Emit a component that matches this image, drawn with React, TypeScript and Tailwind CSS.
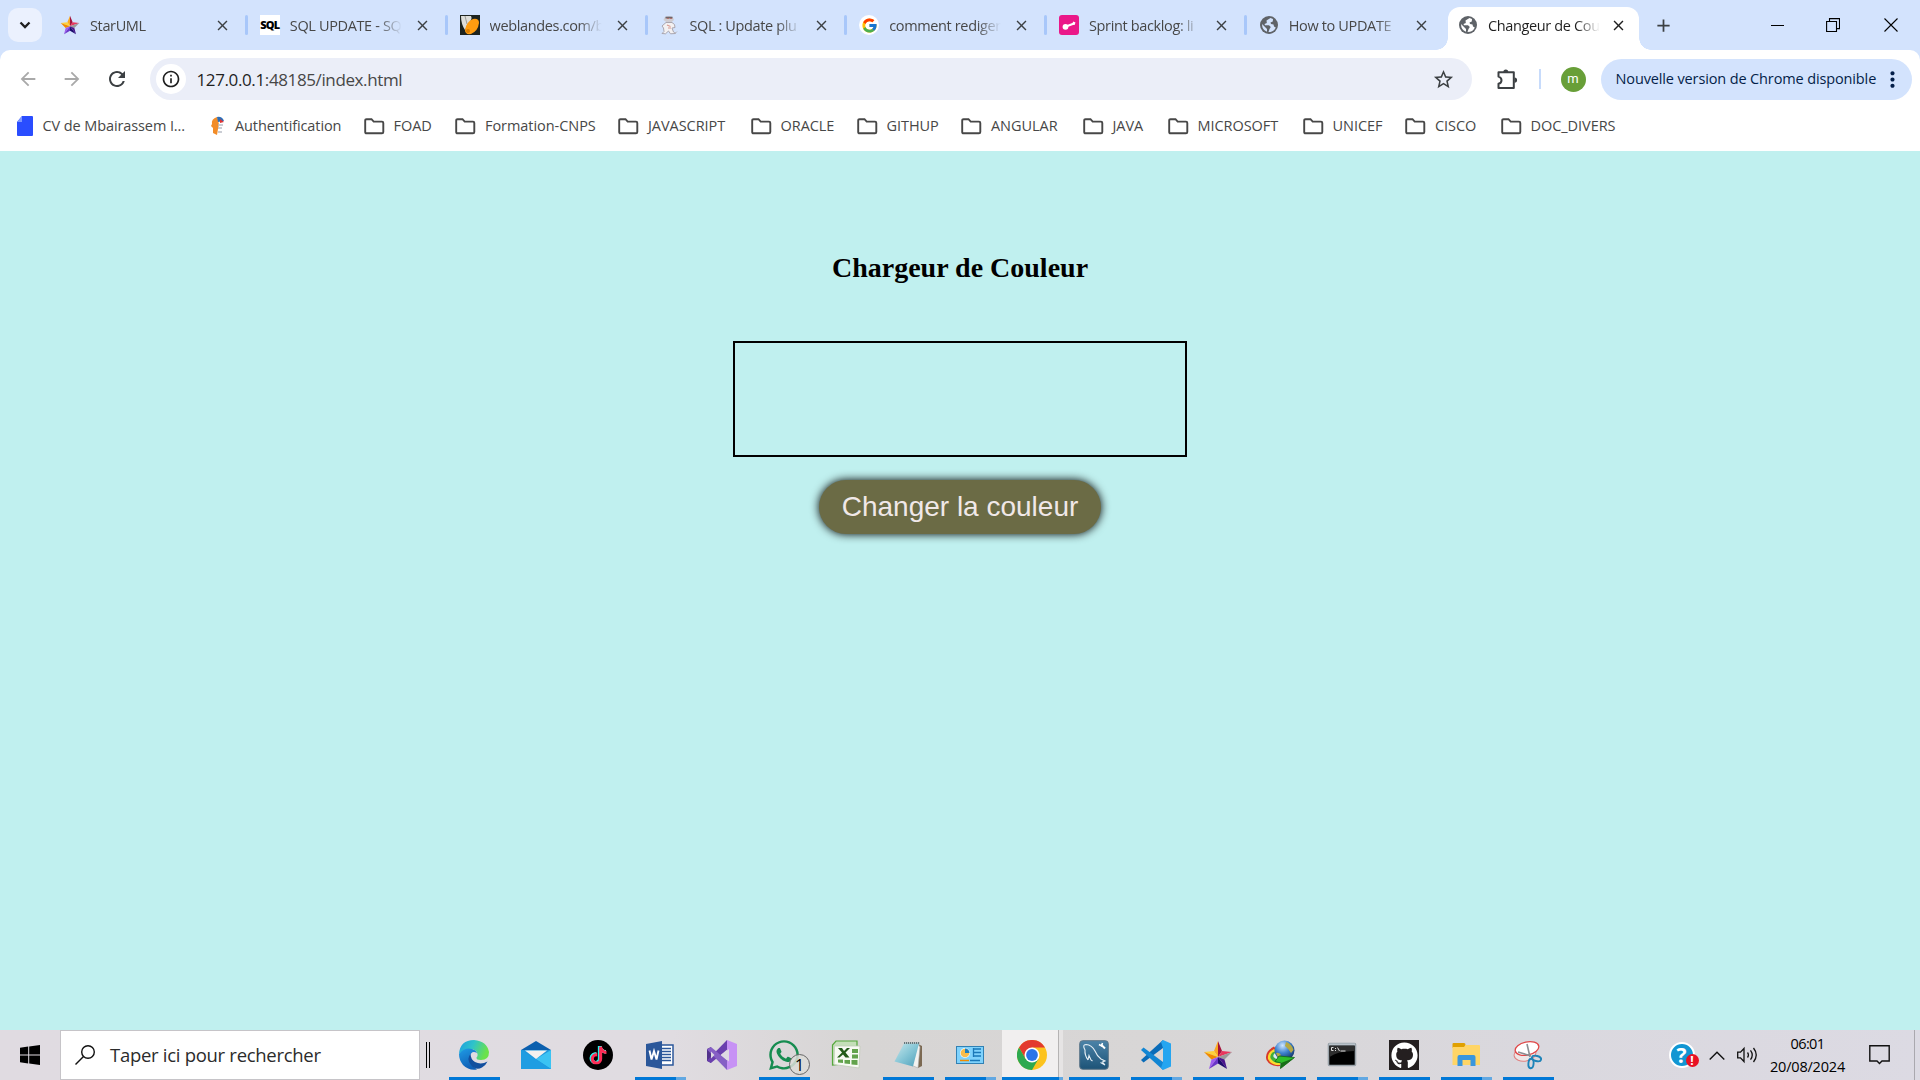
import type { ReactNode } from "react";
import {
  MdAdd,
  MdArrowBack,
  MdArrowForward,
  MdClose,
  MdInfoOutline,
  MdMoreVert,
  MdRefresh,
  MdStarBorder,
} from "react-icons/md";
import { FcGoogle } from "react-icons/fc";
import { FaGithub, FaTiktok, FaWhatsapp } from "react-icons/fa";

function StarLogo({ size }: { size: number }) {
  return (
    <svg width={size} height={size} viewBox="0 0 30 30">
      <path d="M15 1 L11 11 L15 17Z" fill="#f9a825" />
      <path d="M15 1 L19 11 L15 17Z" fill="#a3123c" />
      <path d="M1 12 L11 11 L15 17Z" fill="#ffd23a" />
      <path d="M1 12 L15 17 L8.5 19.500Z" fill="#f08a00" />
      <path d="M29 12 L19 11 L15 17Z" fill="#e8365d" />
      <path d="M29 12 L15 17 L21.500 19.500Z" fill="#9a9a9a" />
      <path d="M6 29 L8.5 19.500 L15 17Z" fill="#a05cf0" />
      <path d="M6 29 L15 17 V23.500Z" fill="#6a35c8" />
      <path d="M24 29 L21.500 19.500 L15 17Z" fill="#4a148c" />
      <path d="M24 29 L15 17 V23.500Z" fill="#1d0a6e" />
    </svg>
  );
}

function SqlIcon() {
  return (
    <span className="flex h-5 w-5 items-center justify-center bg-white font-['Open_Sans'] text-[11px] font-extrabold tracking-[-0.8px] text-black">
      SQL
    </span>
  );
}

function LandesIcon() {
  return (
    <svg width="20" height="20" viewBox="0 0 20 20">
      <rect width="20" height="20" fill="#1d231f" />
      <path d="M1 1 H11 Q13 4 8 9 L5 15 Q1 9 1 1Z" fill="#deded9" />
      <path d="M5 1 Q6 5 7 9" stroke="#8b8b86" strokeWidth=".8" fill="none" />
      <path d="M13 4 Q19 3 19 8 Q18 16 11 19 Q5 20 5 15 Q6 7 13 4Z" fill="#ff9c10" />
      <circle cx="8" cy="16" r="2" fill="#d97d00" />
    </svg>
  );
}

function MascotIcon() {
  return (
    <svg width="20" height="20" viewBox="0 0 20 20">
      <path d="M5.500 2.500 Q10 -.5 14 2.500 L15 5 L12 7.500 H8 L4.500 5Z" fill="#cfccd1" />
      <path d="M6.500 2.600h7" stroke="#6e666b" strokeWidth="1.800" />
      <path d="M8.500 3.500h1M11.500 3.500h1" stroke="#c94a3f" strokeWidth="1" />
      <path d="M7 7.500h6l2.500 2 .5 3-3 .5 1.500 4 2 1.500-5 .3-2-2.800-3 2.800-3.500-.3 2-2-.5-3.500-1.500-2Z" fill="#f3f1f2" stroke="#aaa6af" strokeWidth="1" />
      <path d="M8 10l3.500 1.500M9 13h3" stroke="#d99a90" strokeWidth="1.200" />
      <path d="M15 17.500q2.500 1 3-1" stroke="#b9b6bd" fill="none" />
    </svg>
  );
}

function GoogleIcon() {
  return (
    <span className="flex h-5 w-5 items-center justify-center rounded-full bg-white">
      <FcGoogle size={17} />
    </span>
  );
}

function SprintIcon() {
  return (
    <svg width="20" height="20" viewBox="0 0 20 20">
      <rect width="20" height="20" rx="3" fill="#ea1889" />
      <circle cx="6.500" cy="11.800" r="2.900" fill="#fff" />
      <path d="M7 11.500 L15 8.500" stroke="#fff" strokeWidth="2" strokeLinecap="round" />
      <path d="M14 6.500 L16.500 7.500 L15.500 10 L13.500 9.500Z" fill="#fff" />
    </svg>
  );
}

function GlobeIcon({ land = "#d3e3fd" }: { land?: string }) {
  return (
    <svg width="18" height="18" viewBox="0 0 18 18">
      <circle cx="9" cy="9" r="9" fill="#5f6368" />
      <path
        d="M10.500 2 L6.500 4.500 L6.800 7 L4.500 8 L5 9.200 H9 L10.800 11 L9.500 13 L8.500 16 Q14 16 15.800 11.500 L14 10.500 L13.500 8.500 L11 8 L10.500 6.500 L12.800 5.500 L13 3 Z"
        fill={land}
      />
      <path d="M2 8 L5.500 11.500 L7 13 V15.700 Q2 14 2 8Z" fill={land} />
    </svg>
  );
}

type Tab = { title: string; icon: ReactNode };

const tabs: Tab[] = [
  { title: "StarUML", icon: <StarLogo size={20} /> },
  { title: "SQL UPDATE - SQ", icon: <SqlIcon /> },
  { title: "weblandes.com/b", icon: <LandesIcon /> },
  { title: "SQL : Update plu", icon: <MascotIcon /> },
  { title: "comment rediger", icon: <GoogleIcon /> },
  { title: "Sprint backlog: li", icon: <SprintIcon /> },
  { title: "How to UPDATE", icon: <GlobeIcon /> },
];

function TabTitle({ children }: { children: ReactNode }) {
  return (
    <span className="ml-2.5 w-[113px] shrink-0 overflow-hidden whitespace-nowrap pt-0.5 text-[14.5px] tracking-[-0.36px] [mask-image:linear-gradient(to_right,black_78%,transparent_99%)]">
      {children}
    </span>
  );
}

function TabStrip() {
  return (
    <div className="flex h-[50px] bg-[#d3e3fd]">
      <div className="ml-2 mt-2 flex h-[34px] w-[34px] shrink-0 items-center justify-center rounded-[10px] bg-[#ebf1fe]">
        <svg width="12" height="8" viewBox="0 0 12 8">
          <path d="M1.500 1.500 L6 6 L10.500 1.500" fill="none" stroke="#1f1f1f" strokeWidth="2.300" />
        </svg>
      </div>
      <div className="ml-[18px] flex">
        {tabs.map((t, i) => (
          <div key={t.title} className="flex h-[50px] w-[199.800px] shrink-0 items-center">
            <span className="flex w-5 shrink-0 justify-center">{t.icon}</span>
            <TabTitle>
              <span className="text-[#474747]">{t.title}</span>
            </TabTitle>
            <MdClose size={17} color="#3c4043" className="ml-[11px] shrink-0" />
            {i < 6 && <span className="ml-[14px] h-5 w-[3px] shrink-0 rounded bg-[#a8c7fa]" />}
          </div>
        ))}
      </div>
      <div className="-ml-[22.600px] mt-[7px] flex h-[43px] shrink-0">
        <div className="h-3 w-3 self-end bg-[radial-gradient(circle_at_0_0,transparent_11.500px,white_12px)]" />
        <div className="flex h-[43px] w-[191px] items-center rounded-t-xl bg-white pb-[7px] pl-[10px]">
          <span className="flex w-5 shrink-0 justify-center">
            <GlobeIcon land="#fff" />
          </span>
          <TabTitle>
            <span className="text-[#1f1f1f]">Changeur de Cou</span>
          </TabTitle>
          <MdClose size={17} color="#1f1f1f" className="ml-[9px] shrink-0" />
        </div>
        <div className="h-3 w-3 self-end bg-[radial-gradient(circle_at_100%_0,transparent_11.500px,white_12px)]" />
      </div>
      <MdAdd size={21} color="#3c4043" className="ml-[2px] mt-[14.500px] shrink-0" />
      <div className="ml-auto flex h-[50px] items-center pr-[22px]">
        <span className="mr-[42px] h-px w-[13px] bg-black" />
        <svg className="mr-[44px]" width="14" height="14" viewBox="0 0 14 14">
          <path d="M.6 3.500h9.900v10H.6z M3.500 3V.6h10v10h-2.500" fill="none" stroke="#000" strokeWidth="1.100" />
        </svg>
        <svg width="14" height="14" viewBox="0 0 14 14">
          <path d="M.5 .5l13 13M13.500 .5l-13 13" stroke="#000" strokeWidth="1.100" />
        </svg>
      </div>
    </div>
  );
}

function ExtensionIcon() {
  return (
    <svg width="21" height="21" viewBox="0 0 21 21" className="ml-[25px]">
      <path
        d="M1.500 3.200 H16.800 V19 H1.500 V14.800 Q4.500 14 4.500 11.200 Q4.500 8.400 1.500 7.600Z"
        fill="none"
        stroke="#3c4043"
        strokeWidth="2"
        strokeLinejoin="round"
      />
      <path d="M6.300 3 A2.500 2.500 0 0 1 11.300 3Z M17.500 8.500 A2.600 2.600 0 0 1 17.500 13.700Z" fill="#3c4043" />
    </svg>
  );
}

function Toolbar() {
  return (
    <div className="bg-[#d3e3fd]">
      <div className="flex h-[58px] items-center rounded-t-[10px] bg-white pl-[17px]">
        <MdArrowBack size={22} color="#a9a9a9" />
        <MdArrowForward size={22} color="#a9a9a9" className="ml-[22px]" />
        <MdRefresh size={24} color="#3c4043" className="ml-[22px]" />
        <div className="ml-[21px] flex h-[42px] w-[1322px] items-center rounded-full bg-[#ebeef8] pl-1.5">
          <span className="flex h-[30px] w-[30px] items-center justify-center rounded-full bg-white">
            <MdInfoOutline size={20} color="#1f1f1f" />
          </span>
          <span className="ml-[10.500px] pt-0.5 text-[17px] tracking-[-0.38px] text-[#474747]">
            <span className="text-[#1f1f1f]">127.0.0.1</span>:48185/index.html
          </span>
          <MdStarBorder size={23} color="#3c4043" className="ml-auto mr-[17px]" />
        </div>
        <ExtensionIcon />
        <span className="ml-[21px] h-5 w-[1.500px] bg-[#c7dbfb]" />
        <span className="ml-5 flex h-[25px] w-[25px] items-center justify-center rounded-full bg-[#689f38] pb-px font-[Roboto] text-[13px] leading-none text-white">
          m
        </span>
        <div className="ml-[15px] flex h-[41px] w-[311px] items-center rounded-full bg-[#d3e3fd] pl-[15px] text-[#041e49]">
          <span className="w-[264px] whitespace-nowrap text-[14.500px] tracking-[-0.13px]">
            Nouvelle version de Chrome disponible
          </span>
          <MdMoreVert size={25} />
        </div>
      </div>
    </div>
  );
}

function FolderIcon() {
  return (
    <svg width="21" height="17" viewBox="0 0 21 17">
      <path
        d="M1.200 2.500 Q1.200 1.200 2.500 1.200 H7.500 L9.700 3.600 H18 Q19.300 3.600 19.300 4.900 V14 Q19.300 15.300 18 15.300 H2.500 Q1.200 15.300 1.200 14Z"
        fill="none"
        stroke="#474747"
        strokeWidth="1.900"
      />
    </svg>
  );
}

const folders: [string, string][] = [
  ["FOAD", "w-[91.500px]"],
  ["Formation-CNPS", "w-[163px]"],
  ["JAVASCRIPT", "w-[132.500px]"],
  ["ORACLE", "w-[106px]"],
  ["GITHUP", "w-[104.500px]"],
  ["ANGULAR", "w-[121.500px]"],
  ["JAVA", "w-[85px]"],
  ["MICROSOFT", "w-[135px]"],
  ["UNICEF", "w-[102.500px]"],
  ["CISCO", "w-[95.500px]"],
  ["DOC_DIVERS", "w-[130px]"],
];

function Bookmarks() {
  return (
    <div className="flex h-[43px] items-center bg-white pb-[7px] pl-[17px] text-[14.500px] tracking-[-0.1px] text-[#474747]">
      <div className="flex w-[194px] items-center">
        <svg width="16" height="20" viewBox="0 0 16 20">
          <path d="M5 0H15Q16 0 16 1V19Q16 20 15 20H1Q0 20 0 19V6Z" fill="#2a4dff" />
          <path d="M5 0V6H0Z" fill="#7d98ff" />
        </svg>
        <span className="ml-[9.500px] whitespace-nowrap">CV de Mbairassem I...</span>
      </div>
      <div className="flex w-[152.500px] items-center">
        <svg width="14" height="20" viewBox="0 0 14 20">
          <path d="M6 1 Q0 3 1 8 L0 10 L2 12 V17 L6 19 L7 13 Q9 8 6 1Z" fill="#f28c28" />
          <path d="M6 1 Q11 0 13 5 L7 6Z" fill="#2f6db5" />
          <path d="M9 3 L13 6 L9 7Z" fill="#d33" />
          <path d="M7 9h5M7 12h4M7 16h4" stroke="#b9bdc6" strokeWidth="1.500" />
        </svg>
        <span className="ml-2.5">Authentification</span>
      </div>
      {folders.map(([name, w]) => (
        <div key={name} className={`flex shrink-0 items-center ${w}`}>
          <FolderIcon />
          <span className="ml-[9px] whitespace-nowrap tracking-[-0.05px]">{name}</span>
        </div>
      ))}
    </div>
  );
}

function Page() {
  return (
    <main className="flex h-[879px] flex-col items-center bg-[#c0f0ef]">
      <h1 className="mt-[101px] font-['Liberation_Serif',serif] text-[28px] font-bold leading-8 text-black">
        Chargeur de Couleur
      </h1>
      <div className="mt-[57px] h-[116px] w-[454px] border-2 border-black" />
      <button className="mt-[23px] h-[54px] w-[282px] rounded-[27px] bg-[#6b6b45] font-['Liberation_Sans',sans-serif] text-[28px] leading-[54px] text-[#f0e8e8] shadow-[0_0_10px_black]">
        Changer la couleur
      </button>
    </main>
  );
}

function EdgeIcon() {
  return (
    <svg width="30" height="30" viewBox="0 0 30 30">
      <defs>
        <linearGradient id="edgeTop" x1="0" y1="0" x2="1" y2="0.3">
          <stop offset="0" stopColor="#1b9de2" />
          <stop offset=".5" stopColor="#2fc3c9" />
          <stop offset="1" stopColor="#6be24a" />
        </linearGradient>
        <linearGradient id="edgeLeft" x1="0" y1="0" x2="0.400" y2="1">
          <stop offset="0" stopColor="#1f9ce6" />
          <stop offset="1" stopColor="#0f5fb5" />
        </linearGradient>
      </defs>
      <path d="M0 14 Q1 0 15 0 Q28 1 30 12 Q30 20 22 20 Q17 20 17.500 17.500 Q20 15 17 11 Q11 6 0 14Z" fill="url(#edgeTop)" />
      <path d="M0 14 Q6 7 13 9 Q17 10 18 13 Q12 10 11 17 Q11 24 18 29.500 Q10 31 4 25 Q0 20 0 14Z" fill="url(#edgeLeft)" />
      <path d="M11.500 14 Q7 19 12 25 Q17 31 23 27.500 Q27 25 28.500 21.500 Q22 25 16 22 Q11.500 19 11.500 14Z" fill="#124f9e" />
    </svg>
  );
}

function MailIcon() {
  return (
    <svg width="30" height="30" viewBox="0 0 30 30">
      <path d="M0 10 L15 1 L30 10Z" fill="#0b5fae" />
      <path d="M0 10 H30 V29 H0Z" fill="#1f97dc" />
      <path d="M30 10 V29 L15 19Z" fill="#3bc3f3" />
      <path d="M0 10 L30 29 H0Z" fill="#1f9de2" />
      <path d="M4 10.500 H26 L15 19Z" fill="#f3f1ef" />
    </svg>
  );
}

function TiktokIcon() {
  return (
    <span className="grid h-[30px] w-[30px] place-items-center rounded-full bg-black">
      <FaTiktok size={18} color="#25f4ee" className="col-start-1 row-start-1 -translate-x-[0.600px]" />
      <FaTiktok size={18} color="#fe2c55" className="col-start-1 row-start-1 translate-x-[0.600px] translate-y-[0.600px]" />
      <FaTiktok size={18} color="#fff" className="col-start-1 row-start-1" />
    </span>
  );
}

function WordIcon() {
  return (
    <svg width="30" height="30" viewBox="0 0 30 30">
      <rect x="14" y="5" width="14" height="20" fill="#fff" stroke="#2b579a" strokeWidth="1.500" />
      <path d="M16 8.500h10M16 11.500h10M16 14.500h10M16 17.500h10M16 20.500h10" stroke="#2b579a" strokeWidth="1.500" />
      <path d="M1 4 L17 1 V29 L1 26Z" fill="#2b579a" />
      <path d="M4.500 10.500 L6.500 19.500 L9 11 L11.500 19.500 L13.500 10.500" fill="none" stroke="#fff" strokeWidth="1.900" />
    </svg>
  );
}

function VisualStudioIcon() {
  return (
    <svg width="30" height="30" viewBox="0 0 30 30">
      <path d="M0 9 L4 7 V23 L0 21Z" fill="#52328c" />
      <path d="M0 20.500 L20 0 L22 8 L4 23Z" fill="#6a3fae" />
      <path d="M0 9.500 L4 7 L22 22 L20 30Z" fill="#865fc5" />
      <path d="M20 0 L30 4 V26 L20 30Z" fill="#c792f5" />
      <path d="M4 11.500 V18.500 L7.500 15Z" fill="#ded9e3" />
      <path d="M22 9 L14 15 L22 21.500Z" fill="#ded9e3" />
    </svg>
  );
}

function WhatsappIcon() {
  return (
    <span className="relative flex h-[30px] w-[30px]">
      <FaWhatsapp size={34} color="#168c50" className="-ml-0.5 -mt-0.5 shrink-0" />
      <span className="absolute left-5 top-[14px] flex h-[21px] w-[21px] items-center justify-center rounded-full border border-[#666] bg-[#dcdcd8]/85 text-[16px] font-medium leading-none text-black">
        1
      </span>
    </span>
  );
}

function ExcelIcon() {
  return (
    <svg width="30" height="30" viewBox="0 0 30 30">
      <path d="M5 1H26V7H12V24L1.500 25V5Z" fill="#c4dfb8" stroke="#55a83c" strokeWidth="1.200" />
      <path d="M3.500 6H29L28 28L3 24.500Z" fill="#f7faf3" stroke="#c0ccb8" strokeWidth=".8" />
      <path d="M21 9h6v4h-6zM21 14.500h6v4h-6zM20.500 20h6v5l-6-.5zM13.500 20h5.500v4l-5.500-.5zM7 19.500h5v3.500l-5-.5z" fill="#63a34c" />
      <path d="M7 8h4l2 3 3-3h3l-4.500 4.500 4 5h-4l-2.500-3-3.500 3H6l5-5Z" fill="#235b19" />
    </svg>
  );
}

function NotepadIcon() {
  return (
    <svg width="30" height="30" viewBox="0 0 30 30">
      <defs>
        <linearGradient id="note" x1="0" y1="0" x2="1" y2="1">
          <stop offset="0" stopColor="#c9e8ec" />
          <stop offset=".5" stopColor="#86c6d6" />
          <stop offset="1" stopColor="#4f9fba" />
        </linearGradient>
      </defs>
      <path d="M25 4 L29 6 V26 L25 28Z" fill="#7b6952" />
      <path d="M25 4 L27 7 L25 28 L18 25Z" fill="#f2f2f0" stroke="#aaa" strokeWidth=".6" />
      <path d="M11 3.500 H26 L20 26.500 L1.500 21.500Z" fill="url(#note)" />
      <path d="M11 3h16" stroke="#66777b" strokeWidth="2" strokeDasharray="1.200 .8" />
    </svg>
  );
}

function PanelIcon() {
  return (
    <svg width="30" height="30" viewBox="0 0 30 30">
      <rect x="1.500" y="6.500" width="27" height="17" fill="#7fd2fc" stroke="#3181b4" />
      <circle cx="10" cy="13" r="5" fill="#eef7fb" />
      <circle cx="10" cy="13" r="4.300" fill="#fbbd4a" />
      <path d="M10 13V8.500a4.500 4.500 0 0 1 4.500 4.500Z" fill="#1d7dbd" />
      <path d="M18 9h8M18 12.500h8M18 16h8M18.500 8v9" stroke="#1a78b8" strokeWidth="1.300" />
      <path d="M5 20.500h9" stroke="#f08c00" strokeWidth="1.500" />
      <path d="M15 20.500h10" stroke="#1a78b8" strokeWidth="1.500" />
    </svg>
  );
}

function ChromeIcon() {
  return (
    <svg width="30" height="30" viewBox="0 0 30 30">
      <circle cx="15" cy="15" r="15" fill="#fcc31e" />
      <path d="M2 7.500 A15 15 0 0 1 28 7.500 H15 L8.500 18.750Z" fill="#e33b2e" />
      <path d="M2 7.500 A15 15 0 0 0 15 30 L21.500 18.750 L15 15 L8.500 18.750Z" fill="#2da94f" />
      <circle cx="15" cy="15" r="7.500" fill="#fff" />
      <circle cx="15" cy="15" r="5.900" fill="#2a74e8" />
    </svg>
  );
}

function MysqlIcon() {
  return (
    <svg width="30" height="30" viewBox="0 0 30 30">
      <defs>
        <linearGradient id="wb" x1="0" y1="0" x2="0" y2="1">
          <stop offset="0" stopColor="#4b83a8" />
          <stop offset="1" stopColor="#1d5377" />
        </linearGradient>
      </defs>
      <rect x=".7" y=".7" width="28.600" height="28.600" rx="3" fill="url(#wb)" stroke="#5d7688" />
      <path d="M9 20 Q5.500 15 6 10 Q3 4.500 7 4.500 Q13 5 16 11 Q18 16 22 19 L26 21 L23.500 22 L26 25 L21.500 22.500 M9 20 L10 15.500 L12 20 L13.500 21" fill="none" stroke="#e6eff5" strokeWidth="1.100" />
      <path d="M22 4.500 L26 8.500" stroke="#fff" strokeWidth="2" />
      <path d="M20 4.500 L22.500 6 L23.500 3" stroke="#fff" strokeWidth="1.500" fill="none" />
    </svg>
  );
}

function VscodeIcon() {
  return (
    <svg width="30" height="30" viewBox="0 0 30 30">
      <path d="M0 20 L2.500 22.500 L22 8 V0Z" fill="#0a6cb8" />
      <path d="M0 10 L2.500 7.500 L22 22 V30Z" fill="#1286d3" />
      <path d="M22 0 L30 3.500 V26.500 L22 30 L20 28 L22 22 V8 L20 2Z" fill="#25a5f0" />
    </svg>
  );
}

function IdmIcon() {
  return (
    <svg width="30" height="30" viewBox="0 0 30 30">
      <defs>
        <radialGradient id="idm" cx=".4" cy=".25" r=".75">
          <stop offset="0" stopColor="#cfe6ff" />
          <stop offset=".5" stopColor="#3f83cf" />
          <stop offset="1" stopColor="#123468" />
        </radialGradient>
      </defs>
      <path d="M9 6.500 Q-1 12 1.500 20 Q5 27 15 26 V14Z" fill="#d8392b" />
      <path d="M9 9 Q2 13 3 19 Q6 25.500 15 25 V14Z" fill="#f9dc2f" />
      <path d="M9.500 11.500 Q4.500 14 5.500 18 Q8 23.500 16 23 V14Z" fill="#3fae3a" />
      <path d="M10 13 Q7.500 15 8.500 17 Q11 20 16 19.500 V13Z" fill="#dcecf8" />
      <circle cx="19.500" cy="10.500" r="10" fill="url(#idm)" />
      <path d="M21 2 Q27 4 28.500 10 L26 13 Q24 9 20 6Z" fill="#b4a844" />
      <path d="M11 13 Q14 12 16 15 L13 17.500Z" fill="#b4a844" />
      <path d="M14 16 L29.500 17.500 L15.500 28.500 L16 23 L10 21.500Z" fill="#2fbf2c" stroke="#146315" strokeWidth=".8" />
      <path d="M16 23 L29 18 L15.500 28.500Z" fill="#176e18" />
    </svg>
  );
}

function CmdIcon() {
  return (
    <svg width="30" height="30" viewBox="0 0 30 30">
      <rect x="1.500" y="3.500" width="27" height="22" rx="1" fill="#000" stroke="#9aa3aa" strokeWidth="1.600" />
      <path d="M2 4.500h26" stroke="#b9c2ca" strokeWidth="2" />
      <path d="M2.500 17 Q10 11 27.500 11 V6 H2.500Z" fill="#2e2e2e" />
      <path d="M6.500 7.500h-2v3h2M8.500 8v1M8.500 10v1M10.500 7.500l2 3.500M13.500 11h5" stroke="#ddd" fill="none" />
    </svg>
  );
}

function GithubIcon() {
  return (
    <span className="flex h-[30px] w-[30px] items-center justify-center bg-[#241f20]">
      <FaGithub size={27} color="#fff" />
    </span>
  );
}

function ExplorerIcon() {
  return (
    <svg width="30" height="30" viewBox="0 0 30 30">
      <path d="M1.500 4 Q1.500 3 2.500 3 H13 Q14.500 3 14.500 5 L13.500 8 H1.500Z" fill="#e0a000" />
      <path d="M1.500 7 H13 L14.500 5 H28 Q29 5 29 6 V25 H1.500Z" fill="#ffd566" />
      <path d="M6.500 26 V17 Q6.500 15 8.500 15 H22.500 Q24.500 15 24.500 17 V26 H19.500 V20 H11.500 V26Z" fill="#3a96dd" />
    </svg>
  );
}

function SnipIcon() {
  return (
    <svg width="30" height="30" viewBox="0 0 30 30">
      <ellipse cx="12" cy="14" rx="11" ry="7" fill="#eee7e7" stroke="#e08080" transform="rotate(-10 12 14)" />
      <ellipse cx="14" cy="8.500" rx="12" ry="6.500" fill="#fff" stroke="#e04848" strokeWidth="1.300" transform="rotate(-12 14 8.500)" />
      <path d="M14 4 L17 17 M5 12 L18 16" stroke="#8b8f94" strokeWidth="1.600" />
      <ellipse cx="23.500" cy="18.500" rx="4.700" ry="2.600" fill="none" stroke="#1d83b8" strokeWidth="1.900" transform="rotate(15 23.500 18.500)" />
      <ellipse cx="18" cy="23.500" rx="2.600" ry="4.700" fill="none" stroke="#1d83b8" strokeWidth="1.900" transform="rotate(5 18 23.500)" />
    </svg>
  );
}

type TaskbarApp = { id: string; icon: ReactNode; state: "none" | "open" | "stacked" | "active" };

const apps: TaskbarApp[] = [
  { id: "edge", icon: <EdgeIcon />, state: "open" },
  { id: "mail", icon: <MailIcon />, state: "none" },
  { id: "tiktok", icon: <TiktokIcon />, state: "none" },
  { id: "word", icon: <WordIcon />, state: "stacked" },
  { id: "vs", icon: <VisualStudioIcon />, state: "none" },
  { id: "whatsapp", icon: <WhatsappIcon />, state: "open" },
  { id: "excel", icon: <ExcelIcon />, state: "none" },
  { id: "notepad", icon: <NotepadIcon />, state: "open" },
  { id: "panel", icon: <PanelIcon />, state: "stacked" },
  { id: "chrome", icon: <ChromeIcon />, state: "active" },
  { id: "mysql", icon: <MysqlIcon />, state: "open" },
  { id: "vscode", icon: <VscodeIcon />, state: "stacked" },
  { id: "staruml", icon: <StarLogo size={30} />, state: "open" },
  { id: "idm", icon: <IdmIcon />, state: "open" },
  { id: "cmd", icon: <CmdIcon />, state: "stacked" },
  { id: "github", icon: <GithubIcon />, state: "open" },
  { id: "explorer", icon: <ExplorerIcon />, state: "stacked" },
  { id: "snip", icon: <SnipIcon />, state: "open" },
];

function AppButton({ icon, state }: TaskbarApp) {
  if (state === "active") {
    return (
      <div className="flex h-[50px] w-[62px] shrink-0">
        <div className="ml-px flex h-[50px] w-[57px] shrink-0 flex-col items-center border-r border-[#b5b3b3] bg-[#f1efef] pl-[3px] pt-2.5">
          {icon}
          <span className="-ml-[3px] mt-[7px] h-[3px] w-[57px] shrink-0 bg-[#0078d7]" />
        </div>
        <div className="flex h-[50px] w-[4px] shrink-0 items-end bg-[#e6e4e4]">
          <span className="h-[3px] w-[4px] bg-[#62a8e2]" />
        </div>
      </div>
    );
  }
  return (
    <div className="flex h-[50px] w-[62px] shrink-0 flex-col items-center pt-2.5">
      {icon}
      {state !== "none" && (
        <div className="mt-[7px] flex h-[3px] w-[51px] bg-[#0078d7]">
          {state === "stacked" && <span className="ml-auto h-[3px] w-2.5 bg-[#62a8e2]" />}
        </div>
      )}
    </div>
  );
}

function Taskbar() {
  return (
    <footer className="flex h-[50px] items-center bg-[linear-gradient(to_right,#e0dbe1_0%,#e0dce1_35%,#d7d5d4_45%,#d8d6d6_60%,#dad8de_80%,#dcdae3_100%)]">
      <div className="flex w-[60px] justify-center">
        <svg width="20" height="20" viewBox="0 0 20 20">
          <path d="M0 2.800 L8.200 1.600 V9.500 H0Z M9.200 1.500 L20 0 V9.500 H9.200Z M0 10.500 H8.200 V18.400 L0 17.200Z M9.200 10.500 H20 V20 L9.200 18.500Z" />
        </svg>
      </div>
      <div className="flex h-[50px] w-[360px] items-center border border-[#c6c4c8] bg-white pl-3.5">
        <svg width="20" height="20" viewBox="0 0 20 20">
          <circle cx="13" cy="7" r="6.300" fill="none" stroke="#111" strokeWidth="1.400" />
          <path d="M8.500 11.500 L.5 19.500" stroke="#111" strokeWidth="1.400" />
        </svg>
        <span className="ml-[15px] text-[18.500px] tracking-[-0.29px] text-[#2b2b2b]">Taper ici pour rechercher</span>
      </div>
      <div className="ml-[6px] h-[26px] w-1 border-x border-black" />
      <div className="ml-[13px] flex">
        {apps.map((a) => (
          <AppButton key={a.id} {...a} />
        ))}
      </div>
      <div className="ml-auto flex items-center">
        <div className="relative mr-[14px] flex h-[26px] w-[26px] items-center justify-center rounded-full border-2 border-white bg-[#1196d3] font-['Open_Sans'] text-[21px] font-bold leading-none text-white">
          ?
          <span className="absolute -right-[6px] top-[10px] flex h-[13px] w-[13px] items-center justify-center rounded-full bg-[#e81123] text-[12px] leading-none">
            !
          </span>
        </div>
        <svg width="16" height="9" viewBox="0 0 16 9">
          <path d="M.7 8.500 L8 1.200 L15.300 8.500" fill="none" stroke="#111" strokeWidth="1.400" />
        </svg>
        <svg className="ml-3" width="21" height="18" viewBox="0 0 21 18">
          <path d="M.7 6.200H3.500L7 2.500V15.500L3.500 11.800H.7Z M10.500 6.500Q12.300 9 10.500 11.500 M13.500 4.300Q17 9 13.500 13.700 M16.500 2Q22 9 16.500 16" fill="none" stroke="#111" strokeWidth="1.300" />
        </svg>
        <div className="ml-[6px] flex w-[88px] flex-col items-center text-[14.500px] leading-[23px] tracking-[-0.2px] text-black">
          <span className="tracking-[-0.6px]">06:01</span>
          <span>20/08/2024</span>
        </div>
        <svg className="ml-[17px]" width="21" height="20" viewBox="0 0 21 20">
          <path d="M.8 .8H20.200V16H13L10.500 18.500L8 16H.8Z" fill="none" stroke="#111" strokeWidth="1.400" />
        </svg>
        <div className="ml-[24.500px] h-[50px] w-[6px] border-l border-[#aaa8ae]" />
      </div>
    </footer>
  );
}

export default function App() {
  return (
    <div className="h-[1080px] w-[1920px] overflow-hidden font-['Open_Sans',sans-serif]">
      <TabStrip />
      <Toolbar />
      <Bookmarks />
      <Page />
      <Taskbar />
    </div>
  );
}
